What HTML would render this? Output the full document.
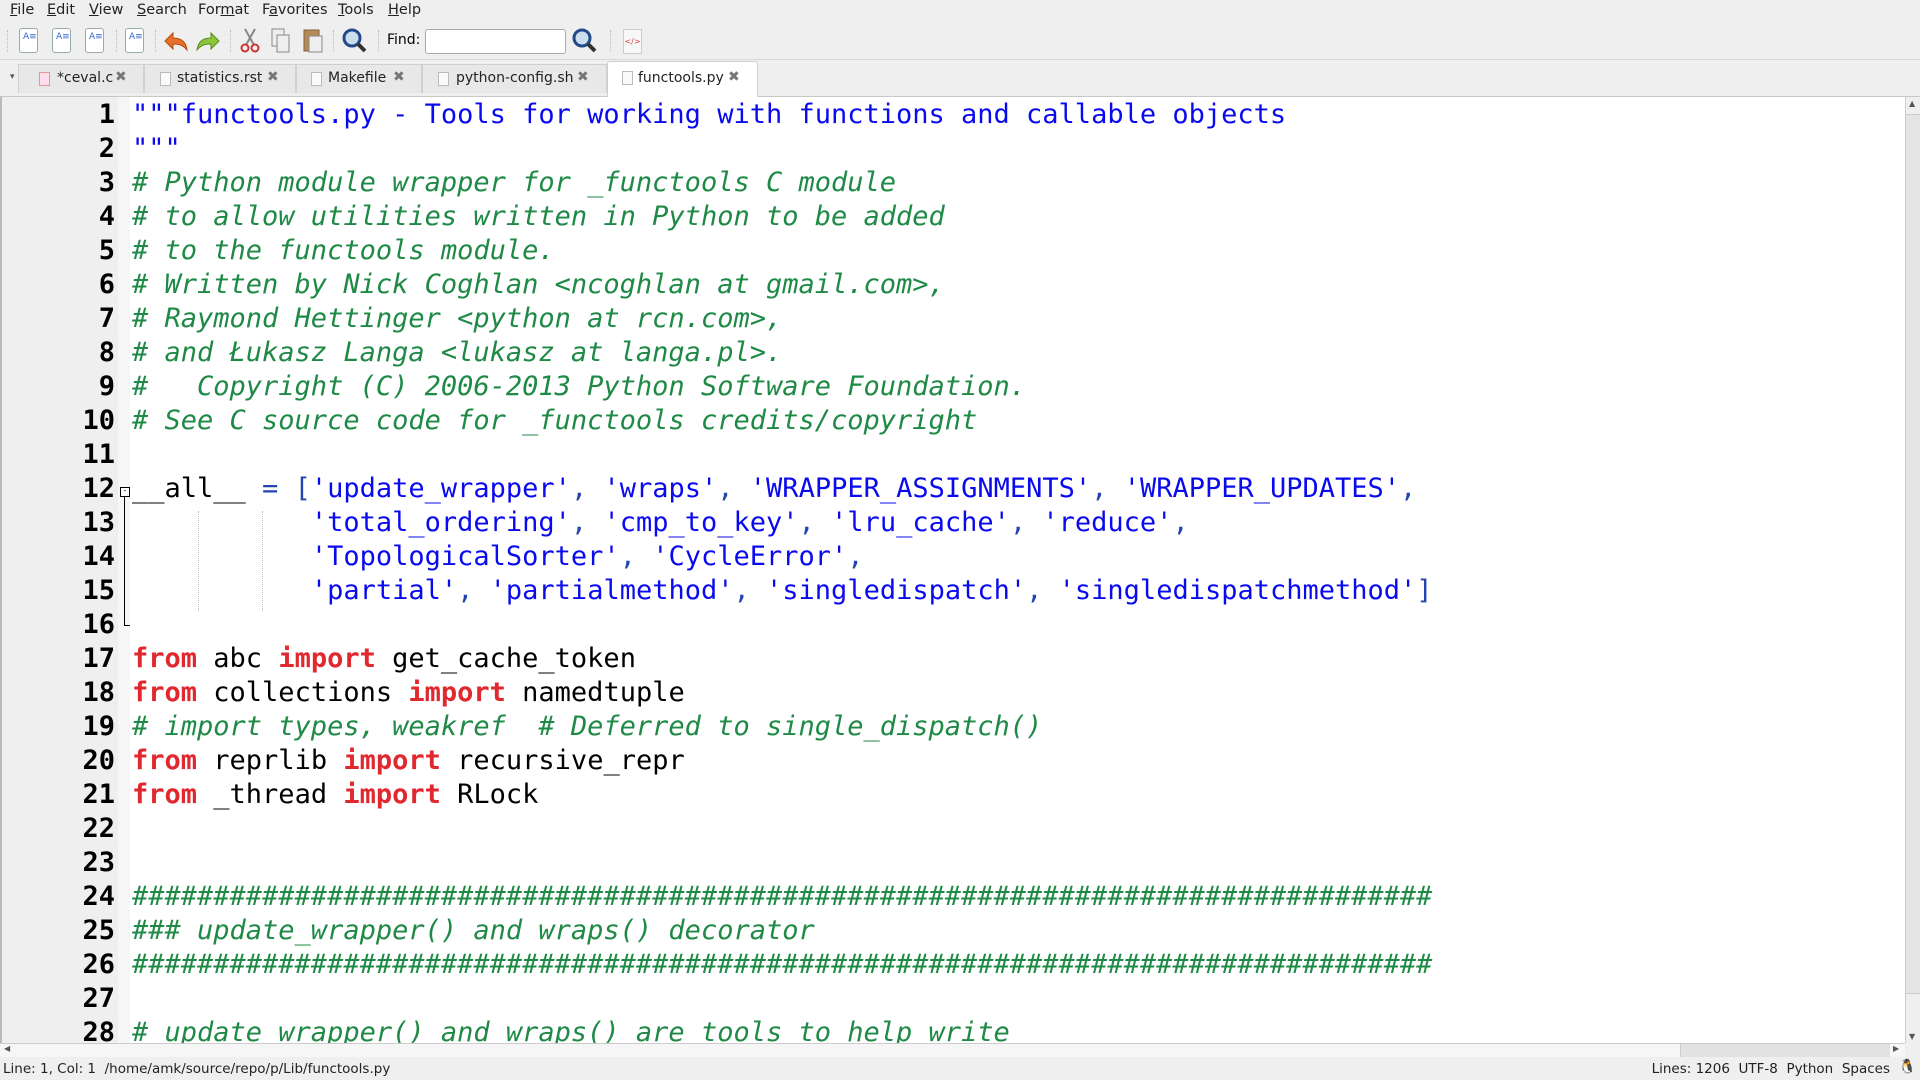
<!DOCTYPE html>
<html><head><meta charset="utf-8"><style>
*{margin:0;padding:0;box-sizing:border-box}
body{width:1920px;height:1080px;overflow:hidden;background:#efefef;font-family:"DejaVu Sans","Liberation Sans",sans-serif;position:relative}
.menu{position:absolute;top:0;left:0;width:1920px;height:22px;font-size:14.5px;color:#222}
.menu span{position:absolute;top:2px}
.menu u{text-decoration:underline}
.tb{position:absolute;top:22px;left:0;width:1920px;height:38px;border-bottom:1px solid #d8d8d8}
.ic{position:absolute}
.doc{top:28px;width:19px;height:25px;border:1px solid #9aa;border-radius:3px;background:#fff}
.doc:after{content:"A≡";position:absolute;left:3px;top:3px;font-size:9px;color:#36c}
.sep{position:absolute;top:30px;width:1px;height:22px;border-left:1px dotted #bbb}
.tabs{position:absolute;top:60px;left:0;width:1920px;height:37px;border-bottom:1px solid #c8c8c8}
.tab{position:absolute;top:64px;height:29px;border:1px solid #d0d0d0;border-bottom:none;background:#e8e8e8;font-size:14px;color:#222;white-space:nowrap}
.tab .cb{position:absolute;top:7px;width:11px;height:14px;border:1px solid #bbb;background:#fafafa}
.tab .t{position:absolute;top:5px}
.tab .x{position:absolute;top:4px;font-size:14px;color:#777;font-weight:bold}
.ed{position:absolute;top:97px;left:0;width:1905px;height:946px;background:#fff;overflow:hidden}
.gut{position:absolute;left:0;top:0;width:118px;height:946px;background:#efefef;border-left:2px solid #bbb}
.fold{position:absolute;left:118px;top:0;width:12px;height:946px;background:#f6f6f6}
.ln{position:absolute;left:0;width:115px;text-align:right;font:bold 27px "DejaVu Sans Mono",monospace;color:#000;line-height:34px;height:34px;margin-top:1px}
.l{position:absolute;left:132px;font:27px "DejaVu Sans Mono",monospace;line-height:34px;height:34px;white-space:pre;color:#000;margin-top:1px}
.c{color:#1e8a46;font-style:italic}
.s{color:#0a0aee}
.k{color:#e0282e;font-weight:bold}
.o{color:#2444b0}
.vs{position:absolute;right:0;top:97px;width:15px;height:946px;background:#efefef;border-left:1px solid #ccc}
.hs{position:absolute;left:0;top:1043px;width:1905px;height:14px;background:#f6f6f6;border-top:1px solid #ccc}
.st{position:absolute;top:1057px;left:0;width:1920px;height:23px;font-size:13.5px;color:#222}
</style></head><body>
<div class="menu">
<span style="left:10px"><u>F</u>ile</span><span style="left:47px"><u>E</u>dit</span><span style="left:89px"><u>V</u>iew</span><span style="left:137px"><u>S</u>earch</span><span style="left:198px">For<u>m</u>at</span><span style="left:262px">F<u>a</u>vorites</span><span style="left:338px"><u>T</u>ools</span><span style="left:388px"><u>H</u>elp</span>
</div>
<div class="tb"></div>
<div class="sep" style="left:7px"></div>
<div class="ic doc" style="left:19px"></div><div class="ic doc" style="left:52px"></div><div class="ic doc" style="left:85px"></div>
<div class="sep" style="left:116px"></div>
<div class="ic doc" style="left:125px"></div>
<div class="sep" style="left:155px"></div>
<svg class="ic" style="left:163px;top:29px" width="26" height="24"><path d="M10 4 L2 12 L10 20 L10 15 C16 15 20 16 24 21 C23 13 18 9 10 9 Z" fill="#e8702a" stroke="#b04a10"/></svg>
<svg class="ic" style="left:195px;top:29px" width="26" height="24"><path d="M16 4 L24 12 L16 20 L16 15 C10 15 6 16 2 21 C3 13 8 9 16 9 Z" fill="#8cc43a" stroke="#5a8a20"/></svg>
<div class="sep" style="left:230px"></div>
<svg class="ic" style="left:240px;top:28px" width="20" height="26"><path d="M5 1 L14 17 M15 1 L6 17" stroke="#888" stroke-width="2"/><circle cx="5" cy="20" r="3.5" fill="none" stroke="#c33" stroke-width="2"/><circle cx="15" cy="20" r="3.5" fill="none" stroke="#c33" stroke-width="2"/></svg>
<svg class="ic" style="left:271px;top:28px" width="20" height="26"><rect x="1" y="1" width="12" height="17" fill="#eee" stroke="#888"/><rect x="6" y="7" width="12" height="17" fill="#eee" stroke="#888"/></svg>
<svg class="ic" style="left:303px;top:27px" width="21" height="27"><rect x="1" y="3" width="15" height="21" fill="#b58a55" stroke="#806040"/><rect x="6" y="9" width="13" height="16" fill="#eee" stroke="#888"/></svg>
<div class="sep" style="left:333px"></div>
<svg class="ic" style="left:342px;top:28px" width="26" height="26"><circle cx="10" cy="10" r="8" fill="#cde" stroke="#224a8a" stroke-width="3"/><path d="M16 16 L23 23" stroke="#333" stroke-width="4"/></svg>
<div class="sep" style="left:378px"></div>
<div style="position:absolute;left:387px;top:32px;font-size:14px">Find:</div>
<div style="position:absolute;left:425px;top:29px;width:141px;height:25px;background:#fff;border:1px solid #aaa;border-radius:3px"></div>
<svg class="ic" style="left:572px;top:28px" width="26" height="26"><circle cx="10" cy="10" r="8" fill="#cde" stroke="#224a8a" stroke-width="3"/><path d="M16 16 L23 23" stroke="#333" stroke-width="4"/></svg>
<div class="sep" style="left:610px"></div>
<div class="ic" style="left:623px;top:29px;width:19px;height:25px;background:#f8f8f8;border:1px solid #ccc;font-size:8px;color:#d44;padding-top:7px;text-align:center">&lt;/&gt;</div>
<div class="tabs"></div>
<div style="position:absolute;left:10px;top:72px;font-size:9px;color:#555">▾</div>
<div class="tab" style="left:18px;width:126px"><span class="cb" style="left:20px;border-color:#d99;background:#fde"></span><span class="t" style="left:38px">*ceval.c</span><span class="x" style="left:96px">✖</span></div>
<div class="tab" style="left:144px;width:152px"><span class="cb" style="left:15px"></span><span class="t" style="left:32px">statistics.rst</span><span class="x" style="left:122px">✖</span></div>
<div class="tab" style="left:296px;width:126px"><span class="cb" style="left:14px"></span><span class="t" style="left:31px">Makefile</span><span class="x" style="left:96px">✖</span></div>
<div class="tab" style="left:422px;width:185px"><span class="cb" style="left:15px"></span><span class="t" style="left:33px">python-config.sh</span><span class="x" style="left:154px">✖</span></div>
<div class="tab" style="left:607px;top:61px;height:36px;width:151px;background:#fff;border-radius:3px 3px 0 0"><span class="cb" style="left:14px;top:9px"></span><span class="t" style="left:30px;top:8px">functools.py</span><span class="x" style="left:120px;top:7px">✖</span></div>
<div class="ed">
<div class="gut"></div><div class="fold"></div>
<div style="position:absolute;left:120px;top:390px;width:10px;height:10px;border:1px solid #000;background:#fff;font-size:8px;line-height:6px;text-align:center">-</div>
<div style="position:absolute;left:124px;top:400px;width:6px;height:129px;border-left:1px solid #000;border-bottom:1px solid #000"></div>
<div style="position:absolute;left:198px;top:414px;height:100px;border-left:1px dotted #bbb"></div>
<div style="position:absolute;left:262px;top:414px;height:100px;border-left:1px dotted #bbb"></div>
<div class="ln" style="top:0">1</div><div class="l s" style="top:0">"""functools.py - Tools for working with functions and callable objects</div>
<div class="ln" style="top:34px">2</div><div class="l s" style="top:34px">"""</div>
<div class="ln" style="top:68px">3</div><div class="l c" style="top:68px"># Python module wrapper for _functools C module</div>
<div class="ln" style="top:102px">4</div><div class="l c" style="top:102px"># to allow utilities written in Python to be added</div>
<div class="ln" style="top:136px">5</div><div class="l c" style="top:136px"># to the functools module.</div>
<div class="ln" style="top:170px">6</div><div class="l c" style="top:170px"># Written by Nick Coghlan &lt;ncoghlan at gmail.com&gt;,</div>
<div class="ln" style="top:204px">7</div><div class="l c" style="top:204px"># Raymond Hettinger &lt;python at rcn.com&gt;,</div>
<div class="ln" style="top:238px">8</div><div class="l c" style="top:238px"># and Łukasz Langa &lt;lukasz at langa.pl&gt;.</div>
<div class="ln" style="top:272px">9</div><div class="l c" style="top:272px">#   Copyright (C) 2006-2013 Python Software Foundation.</div>
<div class="ln" style="top:306px">10</div><div class="l c" style="top:306px"># See C source code for _functools credits/copyright</div>
<div class="ln" style="top:340px">11</div>
<div class="ln" style="top:374px">12</div><div class="l" style="top:374px">__all__ <span class="o">=</span> <span class="o">[</span><span class="s">'update_wrapper'</span><span class="o">,</span> <span class="s">'wraps'</span><span class="o">,</span> <span class="s">'WRAPPER_ASSIGNMENTS'</span><span class="o">,</span> <span class="s">'WRAPPER_UPDATES'</span><span class="o">,</span></div>
<div class="ln" style="top:408px">13</div><div class="l" style="top:408px">           <span class="s">'total_ordering'</span><span class="o">,</span> <span class="s">'cmp_to_key'</span><span class="o">,</span> <span class="s">'lru_cache'</span><span class="o">,</span> <span class="s">'reduce'</span><span class="o">,</span></div>
<div class="ln" style="top:442px">14</div><div class="l" style="top:442px">           <span class="s">'TopologicalSorter'</span><span class="o">,</span> <span class="s">'CycleError'</span><span class="o">,</span></div>
<div class="ln" style="top:476px">15</div><div class="l" style="top:476px">           <span class="s">'partial'</span><span class="o">,</span> <span class="s">'partialmethod'</span><span class="o">,</span> <span class="s">'singledispatch'</span><span class="o">,</span> <span class="s">'singledispatchmethod'</span><span class="o">]</span></div>
<div class="ln" style="top:510px">16</div>
<div class="ln" style="top:544px">17</div><div class="l" style="top:544px"><span class="k">from</span> abc <span class="k">import</span> get_cache_token</div>
<div class="ln" style="top:578px">18</div><div class="l" style="top:578px"><span class="k">from</span> collections <span class="k">import</span> namedtuple</div>
<div class="ln" style="top:612px">19</div><div class="l c" style="top:612px"># import types, weakref  # Deferred to single_dispatch()</div>
<div class="ln" style="top:646px">20</div><div class="l" style="top:646px"><span class="k">from</span> reprlib <span class="k">import</span> recursive_repr</div>
<div class="ln" style="top:680px">21</div><div class="l" style="top:680px"><span class="k">from</span> _thread <span class="k">import</span> RLock</div>
<div class="ln" style="top:714px">22</div>
<div class="ln" style="top:748px">23</div>
<div class="ln" style="top:782px">24</div><div class="l c" style="top:782px">################################################################################</div>
<div class="ln" style="top:816px">25</div><div class="l c" style="top:816px">### update_wrapper() and wraps() decorator</div>
<div class="ln" style="top:850px">26</div><div class="l c" style="top:850px">################################################################################</div>
<div class="ln" style="top:884px">27</div>
<div class="ln" style="top:918px">28</div><div class="l c" style="top:918px"># update_wrapper() and wraps() are tools to help write</div>
</div>
<div class="vs"><div style="position:absolute;top:2px;left:3px;font-size:8px;color:#555">▲</div><div style="position:absolute;top:17px;left:0;width:14px;height:880px;background:#e4e4e4;border-top:1px solid #ccc;border-bottom:1px solid #ccc"></div><div style="position:absolute;bottom:2px;left:3px;font-size:8px;color:#555">▼</div></div>
<div class="hs"><div style="position:absolute;left:4px;top:0;font-size:8px;color:#555">◀</div><div style="position:absolute;left:1680px;top:0;width:210px;height:13px;background:#e2e2e2;border-left:1px solid #ccc"></div><div style="position:absolute;left:1893px;top:0;font-size:8px;color:#555">▶</div></div>
<div class="st"><span style="position:absolute;left:3px;top:4px">Line: 1, Col: 1&nbsp; /home/amk/source/repo/p/Lib/functools.py</span><span style="position:absolute;right:30px;top:4px">Lines: 1206&nbsp; UTF-8&nbsp; Python&nbsp; Spaces</span><span style="position:absolute;right:4px;top:2px;font-size:14px">🐧</span></div>
</body></html>
